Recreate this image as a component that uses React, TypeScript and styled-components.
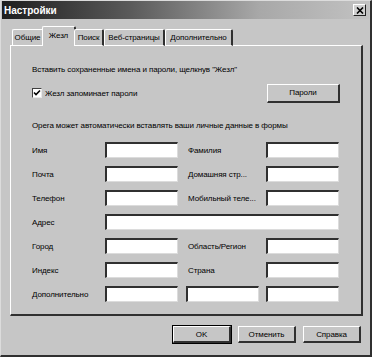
import React from "react";
import styled, { createGlobalStyle } from "styled-components";

const Global = createGlobalStyle`
  html, body { margin: 0; padding: 0; background: #c6c6c6; }
  body { font-family: "Liberation Sans", Arial, sans-serif; font-size: 8px; letter-spacing: -0.1px; color: #000; }
  * { box-sizing: border-box; }
`;

const Window = styled.div`
  width: 372px;
  height: 357px;
  background: #c6c6c6;
  border-top: 1px solid #dcdcdc;
  border-left: 1px solid #dcdcdc;
  border-right: 2px solid #303030;
  border-bottom: 2px solid #303030;
  display: flex;
  flex-direction: column;
  overflow: hidden;
`;

const TitleBar = styled.div`
  height: 18px;
  margin: 0 1px;
  background: linear-gradient(to right, #1e1e1e 0%, #5a5a5a 35%, #a8a8a8 70%, #c2c2c2 100%);
  display: flex;
  align-items: center;
  justify-content: space-between;
  padding: 0 3px 0 2px;
`;

const Title = styled.span`
  color: #fff;
  font-weight: bold;
  font-size: 10px;
  letter-spacing: 0;
`;

const CloseBtn = styled.div`
  width: 13px;
  height: 12px;
  background: #d0d0d0;
  border-top: 1px solid #fff;
  border-left: 1px solid #fff;
  border-right: 1px solid #202020;
  border-bottom: 1px solid #202020;
  display: flex;
  align-items: center;
  justify-content: center;
`;

const Body = styled.div`
  flex: 1;
  display: flex;
  flex-direction: column;
  padding: 7px 8px 0 9px;
`;

const TabStrip = styled.div`
  display: flex;
  align-items: flex-end;
  height: 20px;
  padding-left: 2px;
  position: relative;
  z-index: 1;
  margin-bottom: -1px;
`;

const Tab = styled.div<{ $active?: boolean; $w: number }>`
  width: ${(p) => p.$w}px;
  height: ${(p) => (p.$active ? 20 : 17)}px;
  background: #c6c6c6;
  border-top: 1px solid #fff;
  border-left: 1px solid #fff;
  border-right: 2px solid #303030;
  border-radius: 2px 2px 0 0;
  display: flex;
  align-items: center;
  justify-content: center;
  padding-bottom: ${(p) => (p.$active ? 2 : 0)}px;
  margin-left: ${(p) => (p.$active ? -2 : 0)}px;
  margin-right: ${(p) => (p.$active ? -2 : 0)}px;
  border-bottom: ${(p) => (p.$active ? "none" : "1px solid #fff")};
  white-space: nowrap;
`;

const Panel = styled.div`
  width: 353px;
  height: 271px;
  border-top: 1px solid #fff;
  border-left: 1px solid #fff;
  border-right: 2px solid #303030;
  border-bottom: 2px solid #303030;
  padding: 16px 21px 0 21px;
  display: flex;
  flex-direction: column;
`;

const Line = styled.div<{ $h: number }>`
  height: ${(p) => p.$h}px;
  display: flex;
  align-items: center;
  justify-content: space-between;
  white-space: nowrap;
`;

const CheckRow = styled.label`
  display: flex;
  align-items: center;
  gap: 3px;
`;

const CheckBox = styled.span`
  width: 10px;
  height: 10px;
  background: #fff;
  border-top: 1px solid #404040;
  border-left: 1px solid #404040;
  border-right: 1px solid #e8e8e8;
  border-bottom: 1px solid #e8e8e8;
  display: flex;
  align-items: center;
  justify-content: center;
`;

const Button = styled.div<{ $w: number; $h: number; $def?: boolean }>`
  width: ${(p) => p.$w}px;
  height: ${(p) => p.$h}px;
  background: #c6c6c6;
  border-top: 1px solid #fff;
  border-left: 1px solid #fff;
  border-right: 2px solid #303030;
  border-bottom: 2px solid #303030;
  outline: ${(p) => (p.$def ? "1px solid #000" : "none")};
  display: flex;
  align-items: center;
  justify-content: center;
`;

const Grid = styled.div`
  display: grid;
  grid-template-columns: 73px 81px 80px 73px;
  grid-auto-rows: 16px;
  row-gap: 8px;
  margin-top: 2px;
`;

const Label = styled.div<{ $pad?: number }>`
  display: flex;
  align-items: center;
  padding-left: ${(p) => p.$pad ?? 0}px;
  white-space: nowrap;
`;

const Input = styled.div<{ $span?: number }>`
  width: ${(p) => (p.$span ? "auto" : "73px")};
  grid-column: ${(p) => (p.$span ? `span ${p.$span}` : "auto")};
  height: 16px;
  background: #fff;
  border-top: 2px solid #303030;
  border-left: 2px solid #303030;
  border-right: 1px solid #dcdcdc;
  border-bottom: 1px solid #dcdcdc;
`;

const Footer = styled.div`
  display: flex;
  justify-content: flex-end;
  gap: 7px;
  padding: 10px 1px 0 0;
`;

export default function App() {
  return (
    <>
      <Global />
      <Window>
        <TitleBar>
          <Title>Настройки</Title>
          <CloseBtn>
            <svg width="8" height="7" viewBox="0 0 8 7">
              <path d="M1 0.5 L7 6.5 M7 0.5 L1 6.5" stroke="#000" strokeWidth="1.6" />
            </svg>
          </CloseBtn>
        </TitleBar>
        <Body>
          <TabStrip>
            <Tab $w={32}>Общие</Tab>
            <Tab $w={34} $active>Жезл</Tab>
            <Tab $w={30}>Поиск</Tab>
            <Tab $w={61}>Веб-страницы</Tab>
            <Tab $w={68}>Дополнительно</Tab>
          </TabStrip>
          <Panel>
            <Line $h={14}>Вставить сохраненные имена и пароли, щелкнув "Жезл"</Line>
            <Line $h={34}>
              <CheckRow>
                <CheckBox>
                  <svg width="8" height="8" viewBox="0 0 8 8">
                    <path d="M1 3.5 L3 5.5 L7 1.5" stroke="#000" strokeWidth="1.6" fill="none" />
                  </svg>
                </CheckBox>
                Жезл запоминает пароли
              </CheckRow>
              <Button $w={73} $h={19}>Пароли</Button>
            </Line>
            <Line $h={30}>Opera может автоматически вставлять ваши личные данные в формы</Line>
            <Grid>
              <Label>Имя</Label>
              <Input />
              <Label $pad={2}>Фамилия</Label>
              <Input />
              <Label>Почта</Label>
              <Input />
              <Label $pad={2}>Домашняя стр...</Label>
              <Input />
              <Label>Телефон</Label>
              <Input />
              <Label $pad={2}>Мобильный теле...</Label>
              <Input />
              <Label>Адрес</Label>
              <Input $span={3} />
              <Label>Город</Label>
              <Input />
              <Label $pad={2}>Область/Регион</Label>
              <Input />
              <Label>Индекс</Label>
              <Input />
              <Label $pad={2}>Страна</Label>
              <Input />
              <Label>Дополнительно</Label>
              <Input />
              <Input />
              <Input />
            </Grid>
          </Panel>
          <Footer>
            <Button $w={58} $h={17} $def>OK</Button>
            <Button $w={58} $h={17}>Отменить</Button>
            <Button $w={58} $h={17}>Справка</Button>
          </Footer>
        </Body>
      </Window>
    </>
  );
}
